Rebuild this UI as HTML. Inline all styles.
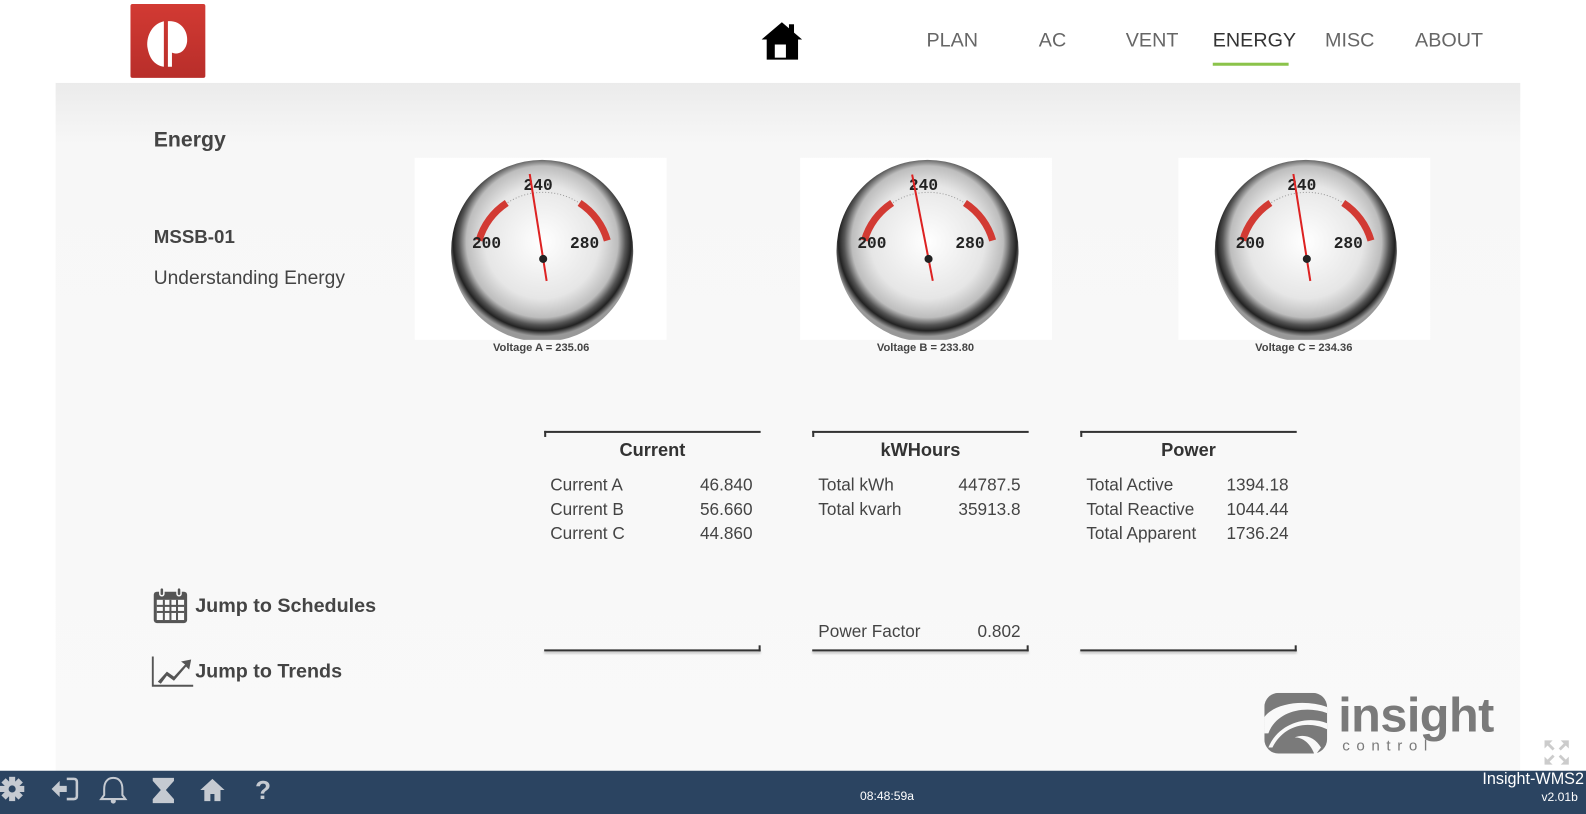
<!DOCTYPE html>
<html><head><meta charset="utf-8"><style>
*{margin:0;padding:0;box-sizing:border-box}
html,body{width:1586px;height:805px;overflow:hidden;background:#fff}
#w{position:absolute;left:0;top:0;width:1568px;height:796px;transform:scale(1.01148);transform-origin:0 0;font-family:"Liberation Sans",sans-serif;color:#444}
.a{position:absolute}
.nav{position:absolute;top:29px;font-size:19.5px;color:#666}
.panel{position:absolute;left:55px;top:82px;width:1448px;height:680px;background:linear-gradient(#ebebeb,#f7f7f7 60px,#f9f9f9)}
.gbox{position:absolute;top:156px;width:249px;height:180px;background:#fff}
.glab{position:absolute;top:338px;font-size:11px;font-weight:bold;color:#444;width:250px;text-align:center}
.tbl{position:absolute;top:426px;width:214px;height:218px}
.tbl .tl{position:absolute;left:0;top:0;width:214px;height:2px;background:#333}
.tbl .tt{position:absolute;left:0;top:0;width:2px;height:6px;background:#333}
.tbl .bl{position:absolute;left:0;bottom:0;width:214px;height:2px;background:#333;box-shadow:0 2px 2px rgba(0,0,0,.25)}
.tbl .bt{position:absolute;right:0;bottom:0;width:2px;height:6px;background:#333}
.tbl h3{position:absolute;top:9px;width:100%;text-align:center;font-size:18px;color:#333}
.row{position:absolute;left:6px;width:200px;font-size:17px;color:#444}
.row span{position:absolute;right:0;top:0}
.bar{position:absolute;left:0;top:762px;width:1568px;height:43px;background:#2b4461}
</style></head><body><div id="w">
<div class="a" style="left:129px;top:4px;width:74px;height:73px;background:linear-gradient(#d23a33,#b82e2a);border-radius:2px"></div>
<svg class="a" style="left:129px;top:4px" width="74" height="73" viewBox="0 0 74 73">
<path d="M33 17 C20 20 15 34 17 44 C19 55 25 61 33 62 Z" fill="#fff"/>
<path d="M37 17 C50 16 57 27 56 37 C55 46 48 51 41 48 L41 62 L37 62 Z" fill="#fff"/>
</svg>
<svg class="a" style="left:751px;top:20px" width="44" height="42" viewBox="0 0 44 42">
<path d="M22 2 L42 19 L38 19 L38 39 L7 39 L7 19 L2 19 Z" fill="#000"/>
<rect x="29" y="4" width="5" height="10" fill="#000"/>
<rect x="15" y="24" width="11" height="13" fill="#fff"/>
</svg>
<div class="nav" style="left:916px">PLAN</div>
<div class="nav" style="left:1027px">AC</div>
<div class="nav" style="left:1113px">VENT</div>
<div class="nav" style="left:1199px;color:#333">ENERGY</div>
<div class="a" style="left:1199px;top:62px;width:75px;height:3px;background:#8bc34a"></div>
<div class="nav" style="left:1310px">MISC</div>
<div class="nav" style="left:1399px">ABOUT</div>

<div class="panel"></div>
<div class="a" style="left:152px;top:127px;font-size:21px;font-weight:bold;color:#444">Energy</div>
<div class="a" style="left:152px;top:223px;font-size:18.5px;font-weight:bold;color:#444">MSSB-01</div>
<div class="a" style="left:152px;top:265px;font-size:19px;color:#444">Understanding Energy</div>

<svg width="0" height="0" style="position:absolute">
<defs>
<radialGradient id="face" cx="50%" cy="45%" r="52%">
<stop offset="0" stop-color="#fff"/><stop offset=".6" stop-color="#e6e6e6"/><stop offset=".8" stop-color="#bdbdbd"/><stop offset=".88" stop-color="#555"/><stop offset=".94" stop-color="#222"/><stop offset="1" stop-color="#999"/>
</radialGradient>
<g id="gauge">
<circle cx="132" cy="92" r="90" fill="url(#face)"/>
<path d="M69.6 81.8 A66 66 0 0 1 196.4 81.8" fill="none" stroke="#999" stroke-width="1" stroke-dasharray="1 2"/>
<path d="M69.6 81.8 A66 66 0 0 1 97 44.6" fill="none" stroke="#d23a33" stroke-width="7"/>
<path d="M169 44.6 A66 66 0 0 1 196.4 81.8" fill="none" stroke="#d23a33" stroke-width="7"/>
<text x="128" y="32" font-family="Liberation Mono,monospace" font-weight="bold" font-size="16" fill="#222" text-anchor="middle">240</text>
<text x="77" y="89" font-family="Liberation Mono,monospace" font-weight="bold" font-size="16" fill="#222" text-anchor="middle">200</text>
<text x="174" y="89" font-family="Liberation Mono,monospace" font-weight="bold" font-size="16" fill="#222" text-anchor="middle">280</text>
</g>
</defs></svg>

<div class="gbox" style="left:410px"><svg width="249" height="180"><g transform="translate(-6 0)"><use href="#gauge"/><g transform="rotate(-9 133 100)"><line x1="133" y1="122" x2="133" y2="15" stroke="#d22" stroke-width="2"/></g><circle cx="133" cy="100" r="4" fill="#222"/></g></svg></div>
<div class="gbox" style="left:791px"><svg width="249" height="180"><g transform="translate(-6 0)"><use href="#gauge"/><g transform="rotate(-11 133 100)"><line x1="133" y1="122" x2="133" y2="15" stroke="#d22" stroke-width="2"/></g><circle cx="133" cy="100" r="4" fill="#222"/></g></svg></div>
<div class="gbox" style="left:1165px"><svg width="249" height="180"><g transform="translate(-6 0)"><use href="#gauge"/><g transform="rotate(-9 133 100)"><line x1="133" y1="122" x2="133" y2="15" stroke="#d22" stroke-width="2"/></g><circle cx="133" cy="100" r="4" fill="#222"/></g></svg></div>
<div class="glab" style="left:410px">Voltage A = 235.06</div>
<div class="glab" style="left:790px">Voltage B = 233.80</div>
<div class="glab" style="left:1164px">Voltage C = 234.36</div>

<div class="tbl" style="left:538px"><div class="tl"></div><div class="tt"></div><div class="bl"></div><div class="bt"></div><h3>Current</h3>
<div class="row" style="top:44px">Current A<span>46.840</span></div>
<div class="row" style="top:68px">Current B<span>56.660</span></div>
<div class="row" style="top:92px">Current C<span>44.860</span></div></div>
<div class="tbl" style="left:803px"><div class="tl"></div><div class="tt"></div><div class="bl"></div><div class="bt"></div><h3>kWHours</h3>
<div class="row" style="top:44px">Total kWh<span>44787.5</span></div>
<div class="row" style="top:68px">Total kvarh<span>35913.8</span></div>
<div class="row" style="top:189px">Power Factor<span>0.802</span></div></div>
<div class="tbl" style="left:1068px"><div class="tl"></div><div class="tt"></div><div class="bl"></div><div class="bt"></div><h3>Power</h3>
<div class="row" style="top:44px">Total Active<span>1394.18</span></div>
<div class="row" style="top:68px">Total Reactive<span>1044.44</span></div>
<div class="row" style="top:92px">Total Apparent<span>1736.24</span></div></div>

<svg class="a" style="left:151px;top:580px" width="35" height="37" viewBox="0 0 35 37">
<rect x="1" y="5" width="33" height="31" rx="3" fill="#555"/>
<rect x="7" y="1" width="4" height="8" rx="2" fill="#555" stroke="#f9f9f9" stroke-width="1.5"/>
<rect x="24" y="1" width="4" height="8" rx="2" fill="#555" stroke="#f9f9f9" stroke-width="1.5"/>
<rect x="4" y="13" width="27" height="20" fill="#f9f9f9"/>
<g fill="#555"><rect x="10" y="13" width="2" height="20"/><rect x="16.5" y="13" width="2" height="20"/><rect x="23" y="13" width="2" height="20"/><rect x="4" y="18" width="27" height="2"/><rect x="4" y="24" width="27" height="2"/></g>
</svg>
<div class="a" style="left:193px;top:588px;font-size:19.5px;font-weight:bold;color:#444">Jump to Schedules</div>
<svg class="a" style="left:150px;top:648px" width="42" height="32" viewBox="0 0 42 32">
<path d="M1 1 V30 H41" fill="none" stroke="#555" stroke-width="2"/>
<path d="M6 26 L15 16 L22 21 L33 9 L29 6 L39 4 L37 14 L34 11 L22 25 L15 20 L9 28 Z" fill="#555"/>
</svg>
<div class="a" style="left:193px;top:653px;font-size:19.5px;font-weight:bold;color:#444">Jump to Trends</div>

<svg class="a" style="left:1250px;top:685px" width="64" height="62" viewBox="0 0 64 62">
<rect x="0" y="0" width="62" height="60" rx="14" fill="#7a7a7a"/>
<path d="M62 20 C40 12 12 18 4 40 L0 40 L0 24 C10 10 40 6 62 14 Z" fill="#f9f9f9"/>
<path d="M62 36 C40 26 18 34 8 54 L4 54 C14 30 42 22 62 30 Z" fill="#f9f9f9"/>
<path d="M50 62 C46 50 38 44 30 44 C40 40 50 44 56 54 Z" fill="#f9f9f9"/>
</svg>
<div class="a" style="left:1323px;top:680px;font-size:48px;font-weight:bold;color:#7a7a7a;letter-spacing:-0.5px">insight</div>
<div class="a" style="left:1327px;top:729px;font-size:15px;color:#7a7a7a;letter-spacing:6.5px">control</div>
<svg class="a" style="left:1526px;top:731px" width="26" height="26" viewBox="0 0 26 26" fill="#ccc">
<path d="M1 1 H9 L6 4 L11 9 L9 11 L4 6 L1 9 Z M25 1 V9 L22 6 L17 11 L15 9 L20 4 L17 1 Z M1 25 V17 L4 20 L9 15 L11 17 L6 22 L9 25 Z M25 25 H17 L20 22 L15 17 L17 15 L22 20 L25 17 Z"/>
</svg>

<div class="bar"></div>
<svg class="a" style="left:0;top:766px" width="280" height="30" viewBox="0 0 280 30" fill="#c5cad1">
<g transform="translate(12 14)"><circle r="8"/><rect x="-3" y="-12" width="6" height="24"/><rect x="-12" y="-3" width="24" height="6"/><rect x="-3" y="-12" width="6" height="24" transform="rotate(45)"/><rect x="-3" y="-12" width="6" height="24" transform="rotate(-45)"/><circle r="3.5" fill="#2b4461"/></g>
<path d="M51 14 L59 6 V11 H66 V17 H59 V22 Z"/><path d="M66 4 H73 Q76 4 76 7 V21 Q76 24 73 24 H66" fill="none" stroke="#c5cad1" stroke-width="2.5"/>
<path d="M112 3 C105 3 103 9 103 14 V20 L100 24 H124 L121 20 V14 C121 9 119 3 112 3 Z" fill="none" stroke="#c5cad1" stroke-width="2"/><circle cx="112" cy="26" r="2.5"/>
<path d="M151 3 H172 V6 L164 15 L172 24 V28 H151 V24 L159 15 L151 6 Z"/>
<path d="M210 4 L198 15 H202 V26 H208 V19 H212 V26 H218 V15 H222 Z"/>
<text x="260" y="24" font-family="Liberation Sans" font-weight="bold" font-size="26" text-anchor="middle">?</text>
</svg>
<div class="a" style="left:838px;top:780px;width:78px;text-align:center;font-size:12px;color:#fff">08:48:59a</div>
<div class="a" style="left:1420px;top:762px;width:146px;text-align:right;font-size:16px;color:#fff">Insight-WMS2</div>
<div class="a" style="left:1420px;top:781px;width:140px;text-align:right;font-size:12px;color:#fff">v2.01b</div>
</div></body></html>
